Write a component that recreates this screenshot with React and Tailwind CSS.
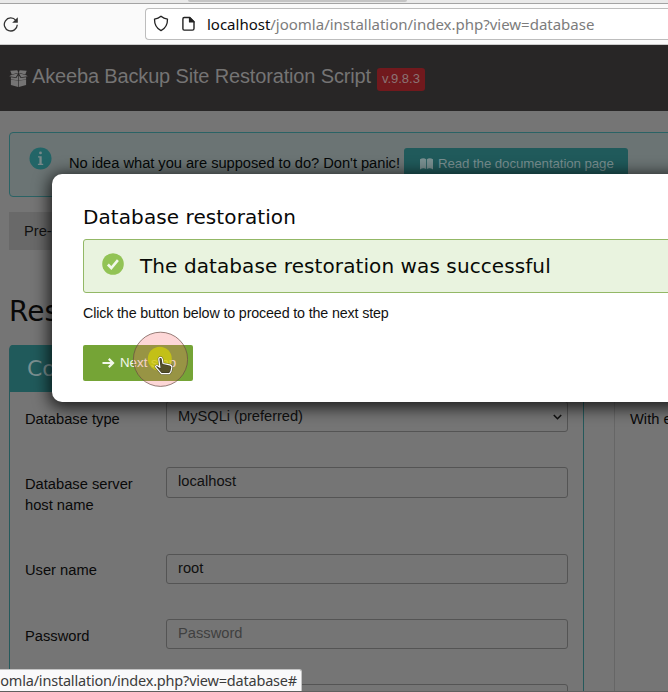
import React from 'react';

const SANS = "font-['Liberation_Sans',Arial,sans-serif]";
const HEAD = "font-['DejaVu_Sans',sans-serif]";
const UI = "font-['Noto_Sans','Open_Sans',sans-serif]";

function BrowserBar() {
  return (
    <div className="shrink-0">
      <div className="h-[3px] bg-[#e9e9e9]">
        <div className="ml-[188px] h-[2px] w-[219px] rounded-b-sm bg-[#c4c4c4]" />
      </div>
      <div className="flex h-[42px] items-center border-t border-b border-t-[#a3a3a3] border-b-[#cccccc] bg-[#fafafa]">
        <svg className="ml-[3px] h-4 w-4 shrink-0" viewBox="0 0 16 16" fill="none" stroke="#333" strokeWidth="1.3">
          <path d="M12.8 4.300A6.500 6.500 0 1 0 14.300 8.800" />
          <path d="M14.8 1.200v5.600H9.200z" fill="#333" stroke="none" />
        </svg>
        <div className="ml-[126px] flex h-8 grow items-center rounded-l border border-r-0 border-[#bdbdbd] bg-white">
          <svg className="-mt-px ml-[7px] h-[17px] w-4 shrink-0" viewBox="0 0 16 17" fill="none" stroke="#222" strokeWidth="1.3" strokeLinejoin="round">
            <path d="M8 1.300C6.200 2.900 4.200 3.800 1.500 4.100C1.400 9.300 3.200 13.300 8 15.700C12.800 13.300 14.600 9.300 14.500 4.100C11.800 3.800 9.800 2.900 8 1.300Z" />
          </svg>
          <svg className="ml-[13px] h-4 w-[13px] shrink-0" viewBox="0 0 13 16" fill="none" stroke="#222" strokeWidth="1.4" strokeLinejoin="round">
            <path d="M2.200 1.500h5.600l4.200 4.200v6.800a1.600 1.600 0 0 1-1.600 1.600H2.200A1.400 1.400 0 0 1 .9 12.700V2.900a1.400 1.400 0 0 1 1.300-1.400z" />
            <path d="M7.600 1.700v4.200H12z" fill="#222" />
          </svg>
          <span className={`${UI} ml-3 text-[15px] leading-5 tracking-[-0.01px] whitespace-nowrap text-[#7c7c7c]`}>
            <span className="text-[#0c0c0d]">localhost</span>/joomla/installation/index.php?view=database
          </span>
        </div>
      </div>
    </div>
  );
}

function BoxIcon() {
  return (
    <svg className="h-[17px] w-[19px] shrink-0" viewBox="0 0 19 17" fill="currentColor">
      <path d="M1.300 .8L8.300 .2L9.300 2.800L2.700 4.500z" />
      <path d="M17.700 .8L10.700 .2L9.700 2.800L16.300 4.500z" />
      <path d="M2.300 4.900L9.200 3.300L6.800 7.200L.2 6.300z" />
      <path d="M16.700 4.900L9.800 3.300L12.200 7.200L18.800 6.300z" />
      <path d="M1.900 7.200L7.300 7.900L9.200 5.200V10.200L1.900 9.500z" />
      <path d="M17.100 7.200L11.700 7.900L9.800 5.200V10.200L17.100 9.500z" />
      <path d="M1.900 9.800L9.200 10.500V16.900L1.900 14.900z" />
      <path d="M17.100 9.800L9.800 10.500V16.900L17.100 14.900z" />
    </svg>
  );
}

function Header() {
  return (
    <header className="flex h-[66px] shrink-0 items-center bg-[#282626] pl-[9px] text-[#757474]">
      <BoxIcon />
      <h1 className={`${SANS} -mt-[5px] ml-1 text-[20px] leading-6 tracking-[-0.155px] whitespace-nowrap`}>Akeeba Backup Site Restoration Script</h1>
      <span className={`${SANS} mt-[2px] ml-[6px] flex h-[23px] w-12 items-center justify-center rounded-[3px] bg-[#71191d] text-[13px] text-[#8b7374]`}>
        v.9.8.3
      </span>
    </header>
  );
}

function HelpNotice() {
  return (
    <div className="mt-[21px] ml-[9px] flex h-[65px] w-[690px] shrink-0 rounded border border-[#2a6365] bg-[#6b7474] pl-[19px]">
      <svg className="mt-[14px] h-[23px] w-[23px]" viewBox="0 0 23 23">
        <circle cx="11.5" cy="11.5" r="11" fill="#226567" />
        <path d="M11.5 4.5a1.4 1.4 0 1 1 0 2.8a1.4 1.4 0 0 1 0-2.8zM9 9.2h3.7v7.6h1.5v1.3H8.9v-1.3h1.5v-6.3H9z" fill="#78898a" />
      </svg>
      <span className={`${SANS} mt-5 ml-[17px] text-[14.7px] leading-[20px] tracking-[-0.035px] whitespace-nowrap text-[#050808]`}>
        No idea what you are supposed to do? Don&apos;t panic!
      </span>
      <div className="mt-[15px] ml-1 flex h-8 w-[224px] items-center rounded-[3px] bg-[#205a5b] pl-4 text-[#7a9091]">
        <svg className="h-[12px] w-[13px]" viewBox="0 0 13 12" fill="currentColor">
          <path d="M0 1.200C2 .1 4.500 0 6.100 1.200V11C4.300 10 2 10.200 0 11.400zM13 1.200C11 .1 8.500 0 6.900 1.200V11c1.800-1 4.100-.8 6.100 .4z" />
        </svg>
        <span className={`${SANS} ml-[5px] text-[13.3px] tracking-[-0.09px] whitespace-nowrap`}>Read the documentation page</span>
      </div>
    </div>
  );
}

function Field({ label, children, className, labelClass }) {
  return (
    <div className={`flex items-start ${className}`}>
      <label className={`${SANS} ${labelClass} w-[141px] shrink-0 pr-5 text-[14.7px] leading-[21px] text-[#090909]`}>{label}</label>
      {children}
    </div>
  );
}

function Box({ children, className }) {
  return (
    <div className={`${SANS} ${className} flex w-[402px] shrink-0 justify-between rounded-[3px] border border-[#545454] pl-[11px] text-[14.7px] leading-[20px]`}>
      {children}
    </div>
  );
}

function ConnectionForm() {
  return (
    <section className="h-[360px] w-[575px] shrink-0 rounded-t border border-[#25595b]">
      <h3 className={`${HEAD} -mt-px flex h-[47px] items-center rounded-t-[3px] bg-[#205a5b] pl-[17px] text-[22px] text-[#7a9091]`}>Con</h3>
      <div className="pl-[15px]">
        <Field label="Database type" className="h-[66px] pt-[9px]" labelClass="mt-[8px]">
          <Box className="h-[31px] pt-[4px] text-[#101010]">
            <span className="tracking-[-0.04px]">MySQLi (preferred)</span>
            <svg className="mt-[8px] mr-[5px] h-[6px] w-[9px]" viewBox="0 0 9 6" fill="none" stroke="#111" strokeWidth="1.6">
              <path d="M.8 1L4.500 4.700L8.200 1" />
            </svg>
          </Box>
        </Field>
        <Field label="Database server host name" className="h-[86px] pt-[9px]" labelClass="mt-[7px]">
          <Box className="h-[31px] pt-[3px] text-[#101010]">localhost</Box>
        </Field>
        <Field label="User name" className="h-[66px] pt-[10px]" labelClass="mt-[6px]">
          <Box className="h-[30px] pt-[3px] text-[#101010]">root</Box>
        </Field>
        <Field label="Password" className="h-[65px] pt-[9px]" labelClass="mt-[7px]">
          <Box className="h-[30px] pt-[3px] text-[#404040]">Password</Box>
        </Field>
        <Field label="" className="pt-[9px]" labelClass="">
          <Box className="h-[30px]" />
        </Field>
      </div>
    </section>
  );
}

function RestorationModal() {
  return (
    <div className="absolute top-[174px] left-[52px] h-[228px] w-[680px] rounded-[10px] bg-white pt-[31px] pl-[31px] shadow-[0_3px_16px_3px_rgba(0,0,0,0.75)]">
      <h2 className={`${HEAD} text-[20px] leading-6 tracking-[0.09px] whitespace-nowrap text-[#080808]`}>Database restoration</h2>
      <div className="mt-[10px] flex h-[54px] items-center rounded-[3px] border border-[#93b866] bg-[#e9f3df]">
        <svg className="-mt-[4px] ml-[18px] h-[22px] w-[22px]" viewBox="0 0 22 22">
          <circle cx="11" cy="11" r="10.800" fill="#92c355" />
          <path d="M5.900 11.500l3.400 3.500L15.900 7.200" fill="none" stroke="#f2f8ea" strokeWidth="2.600" />
        </svg>
        <span className={`${HEAD} ml-4 text-[20px] leading-6 tracking-[0.09px] whitespace-nowrap text-[#080a06]`}>The database restoration was successful</span>
      </div>
      <p className={`${SANS} mt-[10px] text-[14.3px] leading-[20px] tracking-[-0.15px] whitespace-nowrap text-[#111]`}>Click the button below to proceed to the next step</p>
      <button className={`${SANS} mt-[22px] flex h-9 w-[110px] items-center rounded-[2px] bg-[#75a436] pl-[19px] text-[13.3px] text-[#f2f7ea]`}>
        <svg className="h-[10px] w-[13px]" viewBox="0 0 13 10" fill="none" stroke="currentColor" strokeWidth="2.200">
          <path d="M.5 5H11M6.800 .9L11 5L6.800 9.100" />
        </svg>
        <span className="ml-[5px] whitespace-nowrap">Next step</span>
      </button>
    </div>
  );
}

function Pointer() {
  return (
    <svg className="absolute top-[331px] left-[132px] h-14 w-14" viewBox="0 0 56 56">
      <circle cx="28.500" cy="28.300" r="27.100" fill="#f86a6a" fillOpacity=".27" stroke="#6a4a44" strokeWidth=".7" />
      <circle cx="27.800" cy="27.700" r="12" fill="#d2cf08" fillOpacity=".75" />
      <path d="M36 33.500l4.200 1.500l-.8 5l-1.600 2h-7z" fill="#3a3a34" />
      <path d="M28.400 26.300c1.300 0 1.800 .8 1.900 1.900l.7 4.300l6.700 1.400c1.700 .4 2.300 1.200 2.100 2.500l-.8 4l-1.600 2.200h-8l-5.600-6.400c-.7-1 .7-2.100 1.800-1.400l2.300 1.500l-1.100-8.100c-.1-1.100 .5-1.900 1.600-1.900z" fill="#55502a" stroke="#111" strokeWidth="2.200" strokeOpacity=".5" strokeLinejoin="round" />
      <path d="M28.400 26.300c1.300 0 1.800 .8 1.900 1.900l.7 4.300l6.700 1.400c1.700 .4 2.300 1.200 2.100 2.500l-.8 4l-1.600 2.200h-8l-5.600-6.400c-.7-1 .7-2.100 1.800-1.400l2.300 1.500l-1.100-8.100c-.1-1.100 .5-1.900 1.600-1.900z" fill="none" stroke="#fff" strokeWidth="1.200" strokeLinejoin="round" />
    </svg>
  );
}

export default function App() {
  return (
    <div className="relative flex h-[692px] w-full flex-col overflow-hidden bg-[#757575]">
      <BrowserBar />
      <Header />
      <main className="flex min-h-0 grow flex-col overflow-hidden">
        <HelpNotice />
        <div className={`${SANS} mt-[15px] ml-[9px] flex h-[38px] w-[690px] shrink-0 items-center bg-[#696969] pl-[15px] text-[14.7px] text-[#111]`}>
          Pre-
        </div>
        <h2 className={`${HEAD} mt-[43px] ml-[9px] h-[36px] shrink-0 text-[28px] leading-[38px] whitespace-nowrap text-[#090909]`}>Res</h2>
        <div className="mt-[16px] ml-[9px] flex shrink-0">
          <ConnectionForm />
          <section className="ml-[30px] h-[360px] w-[300px] shrink-0 border-l border-[#666] pt-[64px] pl-[15px]">
            <p className={`${SANS} text-[14.7px] leading-[21px] whitespace-nowrap text-[#090909]`}>With e</p>
          </section>
        </div>
      </main>
      <RestorationModal />
      <Pointer />
      <div className="absolute bottom-0 left-0 h-px w-full bg-[#5f5f5f]" />
      <div className={`${UI} absolute bottom-px left-0 flex h-[22px] w-[302px] items-center justify-end overflow-hidden rounded-tr-[3px] border-t border-r border-[#c4c4c4] bg-[#f9f9fa] pr-[4px] text-[14.5px] tracking-[-0.2px] whitespace-nowrap text-[#3c3c3c]`}>
        omla/installation/index.php?view=database#
      </div>
    </div>
  );
}
